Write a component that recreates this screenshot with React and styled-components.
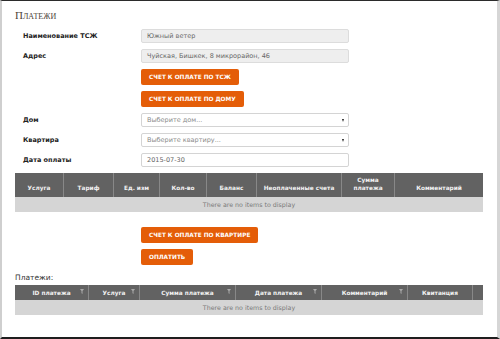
import styled, { createGlobalStyle } from "styled-components";

const GlobalStyle = createGlobalStyle`
    html, body {
        margin: 0;
        padding: 0;
        background: #fff;
    }
    body {
        font-family: "DejaVu Sans", Verdana, sans-serif;
    }
`;

const Frame = styled.div`
    box-sizing: border-box;
    width: 500px;
    height: 339px;
    border-top: 1px solid #2b2b2b;
    border-bottom: 2px solid #1e1e1e;
    border-left: 2px solid #cfcfcf;
    border-right: 3px solid #d6d6d6;
    margin-right: 1px;
    padding: 9px 0 0 13px;
    overflow: hidden;
`;

const PageTitle = styled.h2`
    margin: 0;
    font-family: "Liberation Serif", "DejaVu Serif", serif;
    font-variant: small-caps;
    font-weight: normal;
    font-size: 11px;
    line-height: 11px;
    color: #4d4238;
`;

const Form = styled.div`
    display: grid;
    grid-template-columns: 118px 208px;
    row-gap: 6px;
    margin: 8px 0 0 8px;
    align-items: center;
`;

const Label = styled.div`
    font-size: 6.5px;
    font-weight: bold;
    color: #222;
`;

const Field = styled.div`
    box-sizing: border-box;
    height: 14px;
    border: 1px solid ${p => (p.$readonly ? "#dcdcdc" : "#d4d4d4")};
    border-radius: 2px;
    background: ${p => (p.$readonly ? "#eeeeee" : "#fff")};
    padding: 0 5px;
    display: flex;
    align-items: center;
    justify-content: space-between;
    font-size: 6.5px;
    color: ${p => (p.$dim ? "#8a8a8a" : "#666")};
`;

const Arrow = styled.span`
    width: 0;
    height: 0;
    border-left: 1.5px solid transparent;
    border-right: 1.5px solid transparent;
    border-top: 3px solid #222;
    margin-right: -1px;
`;

const Button = styled.button`
    box-sizing: border-box;
    height: 16px;
    padding: 0 8px;
    border: none;
    border-radius: 2px;
    background: #e45d08;
    color: #fff;
    font-family: "DejaVu Sans", Verdana, sans-serif;
    font-size: 5.8px;
    font-weight: bold;
    text-transform: uppercase;
    justify-self: start;
    cursor: pointer;
`;

const Table = styled.div`
    width: 468px;
    margin-top: ${p => p.$mt}px;
`;

const HeadRow = styled.div`
    display: grid;
    grid-template-columns: ${p => p.$cols};
    height: ${p => p.$h}px;
    background: #626262;
`;

const HeadCell = styled.div`
    box-sizing: border-box;
    border-right: 1px solid #888;
    display: flex;
    align-items: ${p => (p.$bottom ? "flex-end" : "center")};
    justify-content: center;
    padding: ${p => (p.$bottom ? "0 3px 5px" : "0 3px")};
    position: relative;
    color: #f2f2f2;
    font-size: 5.8px;
    font-weight: bold;
    text-align: center;
    line-height: 8px;

    &:last-child {
        border-right: none;
    }
`;

const Funnel = styled.svg`
    position: absolute;
    right: 4px;
    top: 4px;
`;

const EmptyRow = styled.div`
    height: 15px;
    background: #d5d5d5;
    display: flex;
    align-items: center;
    justify-content: center;
    font-size: 6.3px;
    color: #7a7a7a;
`;

const ActionStack = styled.div`
    display: flex;
    flex-direction: column;
    align-items: flex-start;
    gap: 6px;
    margin: 15px 0 0 126px;
`;

const SubTitle = styled.div`
    margin-top: 8px;
    font-size: 7.5px;
    line-height: 9px;
    color: #333;
`;

function FilterIcon() {
    return (
        <Funnel width="4" height="5" viewBox="0 0 4 5">
            <polygon points="0,0 4,0 2.5,2 2.5,5 1.5,4.2 1.5,2" fill="#a9a9a9" />
        </Funnel>
    );
}

const invoiceColumns = [
    "Услуга",
    "Тариф",
    "Ед. изм",
    "Кол-во",
    "Баланс",
    "Неоплаченные счета",
    "Сумма платежа",
    "Комментарий",
];

const paymentColumns = [
    { title: "ID платежа", filter: true },
    { title: "Услуга", filter: true },
    { title: "Сумма платежа", filter: true },
    { title: "Дата платежа", filter: true },
    { title: "Комментарий", filter: true },
    { title: "Квитанция", filter: false },
    { title: "", filter: false },
];

export default function App() {
    return (
        <Frame>
            <GlobalStyle />
            <PageTitle>Платежи</PageTitle>

            <Form>
                <Label>Наименование ТСЖ</Label>
                <Field $readonly>Южный ветер</Field>

                <Label>Адрес</Label>
                <Field $readonly>Чуйская, Бишкек, 8 микрорайон, 46</Field>

                <span />
                <Button>Счет к оплате по ТСЖ</Button>

                <span />
                <Button>Счет к оплате по дому</Button>

                <Label>Дом</Label>
                <Field $dim>
                    Выберите дом...
                    <Arrow />
                </Field>

                <Label>Квартира</Label>
                <Field $dim>
                    Выберите квартиру...
                    <Arrow />
                </Field>

                <Label>Дата оплаты</Label>
                <Field>2015-07-30</Field>
            </Form>

            <Table $mt={6}>
                <HeadRow $h={24} $cols="49px 50px 46px 47px 50px 85px 53px 88px">
                    {invoiceColumns.map(col => (
                        <HeadCell key={col} $bottom>
                            {col === "Сумма платежа" ? (
                                <span>
                                    Сумма
                                    <br />
                                    платежа
                                </span>
                            ) : (
                                col
                            )}
                        </HeadCell>
                    ))}
                </HeadRow>
                <EmptyRow>There are no items to display</EmptyRow>
            </Table>

            <ActionStack>
                <Button>Счет к оплате по квартире</Button>
                <Button>Оплатить</Button>
            </ActionStack>

            <SubTitle>Платежи:</SubTitle>

            <Table $mt={3}>
                <HeadRow $h={15} $cols="74px 51px 96px 86px 86px 65px 10px">
                    {paymentColumns.map((col, i) => (
                        <HeadCell key={i}>
                            {col.title}
                            {col.filter && <FilterIcon />}
                        </HeadCell>
                    ))}
                </HeadRow>
                <EmptyRow>There are no items to display</EmptyRow>
            </Table>
        </Frame>
    );
}
